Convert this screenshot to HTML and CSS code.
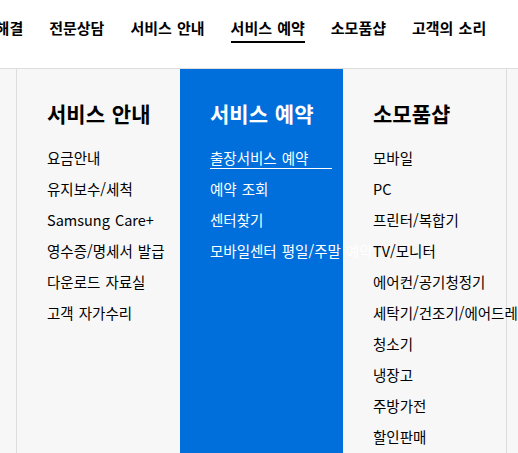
FILE: index.html
```html
<!DOCTYPE html>
<html lang="ko">
<head>
<meta charset="utf-8">
<title>서비스 예약</title>
<link rel="stylesheet" href="styles.css">
</head>
<body>
<header class="gnb">
  <ul class="gnb-list">
    <li><a class="gnb-link" href="#">문제해결</a></li>
    <li><a class="gnb-link" href="#">전문상담</a></li>
    <li><a class="gnb-link" href="#">서비스 안내</a></li>
    <li><a class="gnb-link is-active" href="#">서비스 예약</a></li>
    <li><a class="gnb-link" href="#">소모품샵</a></li>
    <li><a class="gnb-link" href="#">고객의 소리</a></li>
  </ul>
</header>
<div class="panel">
  <div class="cols">
    <section class="col">
      <h2 class="col-title">서비스 안내</h2>
      <ul class="col-list">
        <li><a href="#">요금안내</a></li>
        <li><a href="#">유지보수/세척</a></li>
        <li><a href="#">Samsung Care+</a></li>
        <li><a href="#">영수증/명세서 발급</a></li>
        <li><a href="#">다운로드 자료실</a></li>
        <li><a href="#">고객 자가수리</a></li>
      </ul>
    </section>
    <section class="col col-blue">
      <h2 class="col-title">서비스 예약</h2>
      <ul class="col-list">
        <li><a class="is-current" href="#">출장서비스 예약</a></li>
        <li><a href="#">예약 조회</a></li>
        <li><a href="#">센터찾기</a></li>
        <li><a href="#">모바일센터 평일/주말 예약</a></li>
      </ul>
    </section>
    <section class="col">
      <h2 class="col-title">소모품샵</h2>
      <ul class="col-list">
        <li><a href="#">모바일</a></li>
        <li><a href="#">PC</a></li>
        <li><a href="#">프린터/복합기</a></li>
        <li><a href="#">TV/모니터</a></li>
        <li><a href="#">에어컨/공기청정기</a></li>
        <li><a href="#">세탁기/건조기/에어드레서</a></li>
        <li><a href="#">청소기</a></li>
        <li><a href="#">냉장고</a></li>
        <li><a href="#">주방가전</a></li>
        <li><a href="#">할인판매</a></li>
      </ul>
    </section>
  </div>
</div>
</body>
</html>
```
FILE: styles.css
```css
html, body {
  margin: 0;
  padding: 0;
  overflow: hidden;
}
body {
  width: 518px;
  height: 453px;
  background: #f7f7f7;
  font-family: "Noto Sans CJK KR", "Noto Sans", sans-serif;
  color: #000;
}
a {
  color: inherit;
  text-decoration: none;
}
.gnb {
  height: 68px;
  background: #fff;
  border-bottom: 1px solid #dddddd;
}
.gnb-list {
  display: flex;
  gap: 26px;
  margin: 0 0 0 -32px;
  padding: 0;
  list-style: none;
  white-space: nowrap;
}
.gnb-link {
  display: block;
  padding: 18px 0 3px;
  font-size: 15px;
  font-weight: 700;
  line-height: 20px;
  word-spacing: 1px;
  border-bottom: 2px solid transparent;
}
.gnb-link.is-active {
  border-bottom-color: #000;
}
.panel {
  height: 384px;
}
.cols {
  display: grid;
  grid-template-columns: repeat(3, 163px);
  width: 489px;
  height: 100%;
  margin-left: 16px;
  border-left: 1px solid #dddddd;
  border-right: 1px solid #dddddd;
}
.col {
  padding: 30px 11px 0 30px;
  min-width: 0;
}
.col-blue {
  background: #006fdc;
  color: #fff;
}
.col-title {
  margin: 0 0 20px;
  font-size: 21px;
  font-weight: 700;
  line-height: 28px;
  word-spacing: 1px;
}
.col-list {
  display: flex;
  flex-direction: column;
  gap: 10px;
  margin: 0;
  padding: 0;
  list-style: none;
}
.col-list a {
  display: block;
  font-size: 14.5px;
  line-height: 21px;
  word-spacing: 1px;
  white-space: nowrap;
}
.col-list a.is-current {
  border-bottom: 1px solid #fff;
  margin-bottom: -1px;
}
```
